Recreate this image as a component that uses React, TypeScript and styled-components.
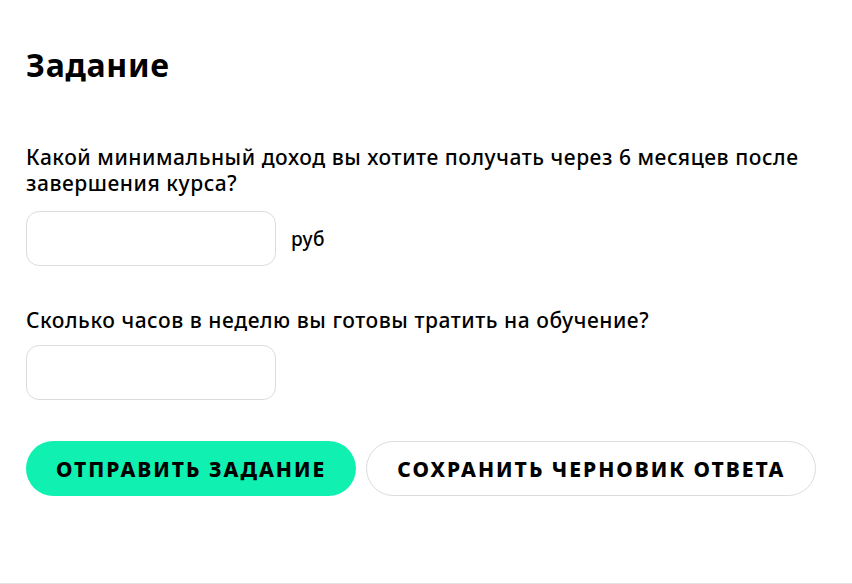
import React from "react";
import styled, { createGlobalStyle } from "styled-components";

const Global = createGlobalStyle`
  html, body { margin: 0; padding: 0; background: #fff; }
  body { font-family: "Noto Sans", "Open Sans", sans-serif; color: #000; }
  * { box-sizing: border-box; }
`;

const Page = styled.div`
  width: 852px;
  height: 584px;
  border-bottom: 1px solid #e2e2e2;
  padding: 42px 26px 0 26px;
  display: flex;
  flex-direction: column;
`;

const Title = styled.h1`
  margin: 0;
  font-size: 32px;
  line-height: 46px;
  font-weight: 700;
  letter-spacing: 0.7px;
`;

const Question = styled.div<{ $mt: number }>`
  margin-top: ${(p) => p.$mt}px;
  display: flex;
  flex-direction: column;
`;

const Label = styled.div`
  font-size: 21px;
  line-height: 26px;
  font-weight: 500;
  letter-spacing: 0.55px;
  max-width: 800px;
`;

const FieldRow = styled.div<{ $mt: number }>`
  margin-top: ${(p) => p.$mt}px;
  display: flex;
  align-items: center;
  gap: 15px;
`;

const Input = styled.input`
  width: 250px;
  height: 55px;
  border: 1px solid #dcdcdc;
  border-radius: 13px;
  outline: none;
  font-size: 18px;
  padding: 0 16px;
  background: #fff;
`;

const Unit = styled.span`
  font-size: 19px;
  font-weight: 500;
  letter-spacing: 0.4px;
`;

const Buttons = styled.div`
  margin-top: 41px;
  display: flex;
  gap: 10px;
`;

const Button = styled.button<{ $primary?: boolean }>`
  height: 55px;
  border-radius: 28px;
  padding: 0 30px;
  font-family: inherit;
  font-size: 21px;
  font-weight: 800;
  letter-spacing: 2px;
  text-transform: uppercase;
  color: #000;
  cursor: pointer;
  background: ${(p) => (p.$primary ? "#10f0b0" : "#fff")};
  border: ${(p) => (p.$primary ? "none" : "1px solid #dcdcdc")};
`;

export default function App() {
  return (
    <>
      <Global />
      <Page>
        <Title>Задание</Title>
        <Question $mt={56}>
          <Label>
            Какой минимальный доход вы хотите получать через 6 месяцев после
            завершения курса?
          </Label>
          <FieldRow $mt={15}>
            <Input />
            <Unit>руб</Unit>
          </FieldRow>
        </Question>
        <Question $mt={41}>
          <Label>Сколько часов в неделю вы готовы тратить на обучение?</Label>
          <FieldRow $mt={12}>
            <Input />
          </FieldRow>
        </Question>
        <Buttons>
          <Button $primary>Отправить задание</Button>
          <Button>Сохранить черновик ответа</Button>
        </Buttons>
      </Page>
    </>
  );
}
